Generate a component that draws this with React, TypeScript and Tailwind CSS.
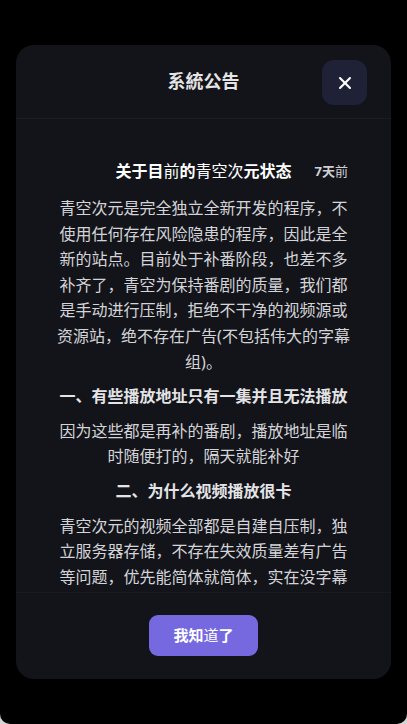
import { X } from "lucide-react";

const font = {
  fontFamily: '"Noto Sans", "Noto Sans CJK SC", sans-serif',
};

function Para({ children }: { children: React.ReactNode }) {
  return (
    <p className="text-center text-[16px] leading-[1.6] text-[#d4d4d8]">{children}</p>
  );
}

function Heading({ children }: { children: React.ReactNode }) {
  return (
    <h3 className="my-[9px] text-center text-[16px] font-bold leading-[1.6] text-[#e4e4e7]">
      {children}
    </h3>
  );
}

export default function App() {
  return (
    <div className="bg-[#d4d4d4]" style={font}>
      <div className="flex h-[724px] w-full justify-center overflow-hidden rounded-b-[10px] bg-black pt-[45px]">
        <div className="flex h-[634px] w-[375px] flex-col overflow-hidden rounded-[18px] bg-[#13141a]">
          <header className="relative flex h-[74px] shrink-0 items-center justify-center border-b border-[#1c1d24]">
            <h2 className="text-[18px] font-bold text-[#e5e5e5]">系統公告</h2>
            <button
              type="button"
              className="absolute right-[24px] top-[15px] flex h-[45px] w-[45px] items-center justify-center rounded-[12px] bg-[#1f2136] text-white"
            >
              <X size={20} strokeWidth={2.5} />
            </button>
          </header>

          <div className="flex-1 overflow-hidden px-[40px] pt-[40px]">
            <div className="relative mb-[13px] flex items-center justify-center px-[3px]">
              <h1 className="text-[16px] leading-[24px] text-white">
                <span className="font-bold">关于目</span>
                <span>前</span>
                <span className="font-bold">的</span>
                <span>青空次</span>
                <span className="font-bold">元状态</span>
              </h1>
              <span className="absolute right-[3px] top-0 text-[13px] leading-[24px] text-[#d0d0d4]">
                <span className="font-bold">7天</span>前
              </span>
            </div>

            <Para>
              青空次元是完全独立全新开发的程序，不使用任何存在风险隐患的程序，因此是全新的站点。目前处于补番阶段，也差不多补齐了，青空为保持番剧的质量，我们都是手动进行压制，拒绝不干净的视频源或资源站，绝不存在广告(不包括伟大的字幕组)。
            </Para>
            <Heading>一、有些播放地址只有一集并且无法播放</Heading>
            <Para>
              因为这些都是再补的番剧，播放地址是临时随便打的，隔天就能补好
            </Para>
            <Heading>二、为什么视频播放很卡</Heading>
            <Para>
              青空次元的视频全部都是自建自压制，独立服务器存储，不存在失效质量差有广告等问题，优先能简体就简体，实在没字幕的才会用繁体或其他语言的字幕。
            </Para>
          </div>

          <footer className="flex h-[87px] shrink-0 justify-center border-t border-[#1a1b22] pt-[22px]">
            <button
              type="button"
              className="h-[41px] w-[109px] rounded-[9px] bg-[#7669e0] text-[15px] text-white"
            >
              <span className="font-bold">我知</span>道<span className="font-bold">了</span>
            </button>
          </footer>
        </div>
      </div>
    </div>
  );
}
